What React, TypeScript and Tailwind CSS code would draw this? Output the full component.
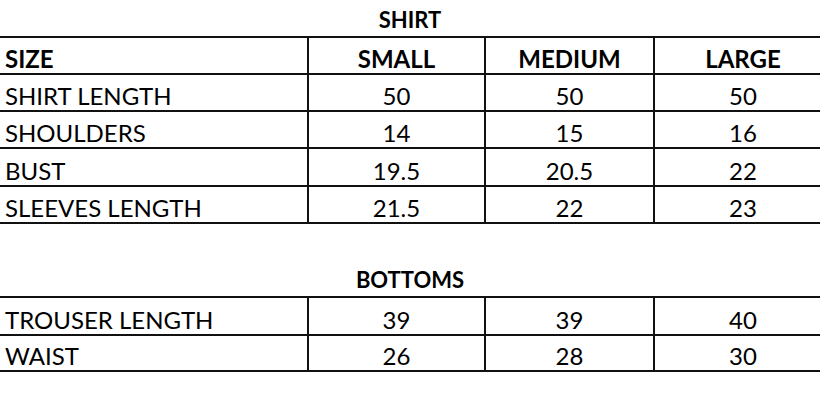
import React from "react";

const shirtRows = [
  ["SHIRT LENGTH", "50", "50", "50"],
  ["SHOULDERS", "14", "15", "16"],
  ["BUST", "19.5", "20.5", "22"],
  ["SLEEVES LENGTH", "21.5", "22", "23"],
];

const bottomRows = [
  ["TROUSER LENGTH", "39", "39", "40"],
  ["WAIST", "26", "28", "30"],
];

// row heights tuned so the rules land where the sheet's gridlines are
const shirtHeights = ["h-[37px]", "h-[37px]", "h-[38px]", "h-[37px]"];
const bottomHeights = ["h-[38px]", "h-[36px]"];

const Row = ({ cells, bold, h }: { cells: string[]; bold?: boolean; h: string }) => (
  <div className={`flex ${h} border-b-2 border-[#111] ${bold ? "font-bold" : ""}`}>
    <div className="w-[307px] flex items-end pl-[5px] pb-[2px] leading-none">{cells[0]}</div>
    <div className="w-[177px] flex items-end justify-center pb-[2px] border-l-2 border-[#111] leading-none">
      {cells[1]}
    </div>
    <div className="w-[169px] flex items-end justify-center pb-[2px] border-l-2 border-[#111] leading-none">
      {cells[2]}
    </div>
    <div className="w-[178px] flex items-end justify-center pb-[2px] border-l-2 border-[#111] leading-none">
      {cells[3]}
    </div>
  </div>
);

const Title = ({ text, h }: { text: string; h: string }) => (
  <div className={`${h} w-[820px] flex items-end justify-center pb-[5px] font-bold text-[22px] leading-none border-b-2 border-[#111]`}>
    {text}
  </div>
);

export default function App() {
  return (
    <div className="w-[820px] h-[409px] bg-white overflow-hidden text-black text-[24px] font-['Lato',sans-serif]">
      <div className="w-[831px]">
        <Title text="SHIRT" h="h-[38px]" />
        <Row cells={["SIZE", "SMALL", "MEDIUM", "LARGE"]} bold h="h-[37px]" />
        {shirtRows.map((r, i) => (
          <Row key={r[0]} cells={r} h={shirtHeights[i]} />
        ))}
        <div className="h-[37px]" />
        <Title text="BOTTOMS" h="h-[37px]" />
        {bottomRows.map((r, i) => (
          <Row key={r[0]} cells={r} h={bottomHeights[i]} />
        ))}
      </div>
    </div>
  );
}
